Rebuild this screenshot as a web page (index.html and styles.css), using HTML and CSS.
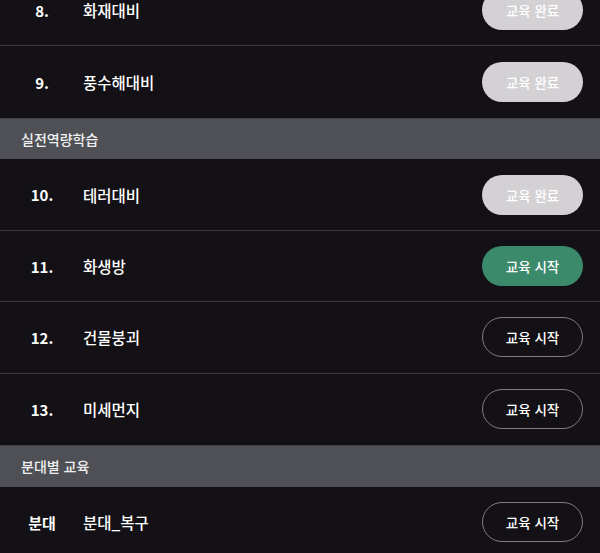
FILE: index.html
```html
<!DOCTYPE html>
<html lang="ko">
<head>
<meta charset="utf-8">
<link rel="stylesheet" href="styles.css">
</head>
<body>
<div class="list">
  <div class="row">
    <span class="num">8.</span><span class="name">화재대비</span>
    <button class="btn done">교육 완료</button>
  </div>
  <div class="row last">
    <span class="num">9.</span><span class="name">풍수해대비</span>
    <button class="btn done">교육 완료</button>
  </div>
  <div class="section">실전역량학습</div>
  <div class="row">
    <span class="num">10.</span><span class="name">테러대비</span>
    <button class="btn done">교육 완료</button>
  </div>
  <div class="row">
    <span class="num">11.</span><span class="name">화생방</span>
    <button class="btn active">교육 시작</button>
  </div>
  <div class="row">
    <span class="num">12.</span><span class="name">건물붕괴</span>
    <button class="btn outline">교육 시작</button>
  </div>
  <div class="row last">
    <span class="num">13.</span><span class="name">미세먼지</span>
    <button class="btn outline">교육 시작</button>
  </div>
  <div class="section">분대별 교육</div>
  <div class="row last">
    <span class="num">분대</span><span class="name">분대_복구</span>
    <button class="btn outline">교육 시작</button>
  </div>
</div>
</body>
</html>
```
FILE: styles.css
```css
html, body {
  margin: 0;
  padding: 0;
  background: #131115;
  overflow: hidden;
}
body {
  font-family: "Noto Sans CJK KR", "Noto Sans", sans-serif;
  color: #ffffff;
}
.list {
  display: flex;
  flex-direction: column;
  margin-top: -25px;
}
.row {
  box-sizing: border-box;
  height: 71.4px;
  display: flex;
  align-items: center;
  padding: 0 17px 0 12px;
  border-bottom: 1px solid #3a383d;
}
.row.last {
  border-bottom: none;
}
.num {
  width: 60px;
  text-align: center;
  font-weight: 700;
  font-size: 15px;
  flex: none;
}
.name {
  flex: 1;
  padding-left: 11px;
  font-size: 15.5px;
  font-weight: 500;
}
.btn {
  width: 101px;
  height: 40px;
  border-radius: 20px;
  font-family: inherit;
  font-size: 13.5px;
  font-weight: 500;
  color: #ffffff;
  border: 1px solid transparent;
  padding: 0;
  flex: none;
}
.btn.done {
  background: #d3d1d4;
}
.btn.active {
  background: #3b8a6b;
}
.btn.outline {
  background: transparent;
  border-color: #7e7c80;
}
.section {
  box-sizing: border-box;
  height: 41.7px;
  background: #4e5056;
  border-top: 1px solid #3e3f44;
  display: flex;
  align-items: center;
  padding-left: 21px;
  font-size: 14px;
  font-weight: 500;
  color: #f0f0f2;
}
```
